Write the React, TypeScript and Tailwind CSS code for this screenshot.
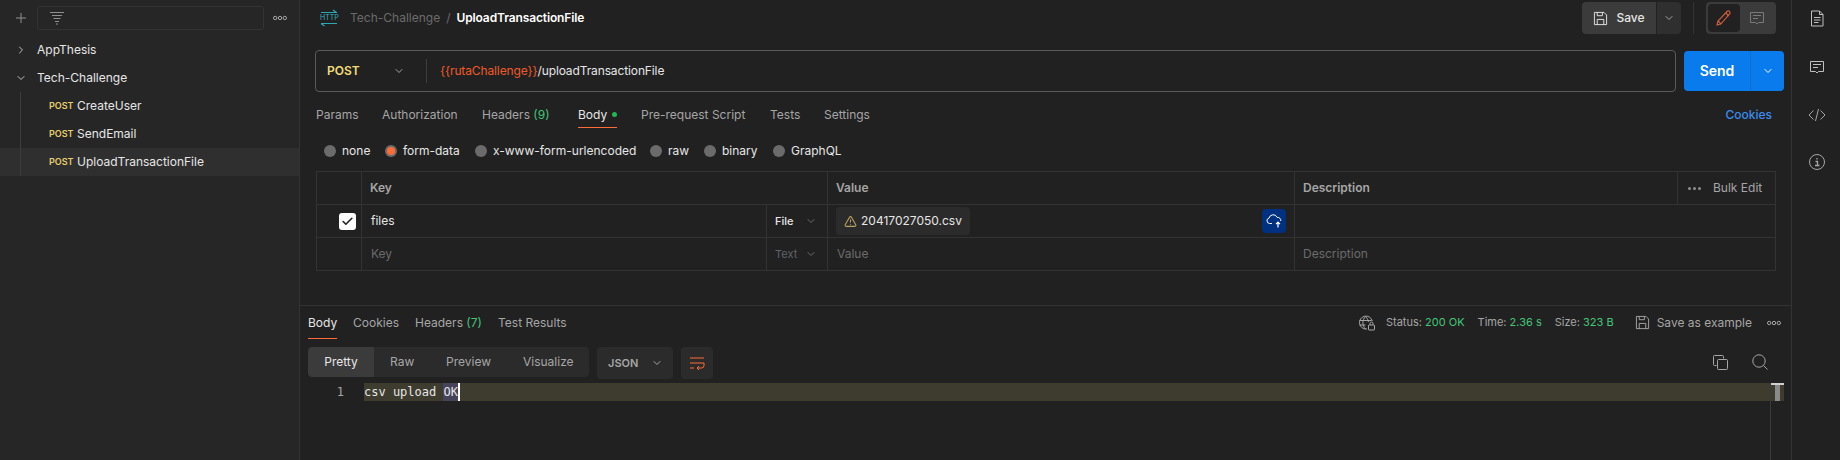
import { ChevronDown, ChevronRight, Check, Plus, TriangleAlert } from "lucide-react"

function Dots({ className = "" }: { className?: string }) {
  return (
    <svg width="14" height="6" viewBox="0 0 14 6" fill="none" stroke="currentColor" strokeWidth="1" className={className}>
      <circle cx="2.2" cy="3" r="1.7" />
      <circle cx="7" cy="3" r="1.7" />
      <circle cx="11.8" cy="3" r="1.7" />
    </svg>
  )
}

function FilterIcon() {
  return (
    <svg width="16" height="14" viewBox="0 0 16 14" fill="none" stroke="#8f8f8f" strokeWidth="1">
      <path d="M1 1.5h14M3 4.5h10M4.5 7.5h7M6 10.5h4M7 13h2" />
    </svg>
  )
}

function SaveIcon({ size = 16, color = "#e6e6e6" }: { size?: number; color?: string }) {
  return (
    <svg width={size} height={size} viewBox="0 0 16 16" fill="none" stroke={color} strokeWidth="1">
      <path d="M1.5 1.5h10.2l2.8 2.8v10.2h-13z" />
      <path d="M4.5 1.5v3.5h5.5v-3.5M4.5 14.5v-5.5h7v5.5" />
    </svg>
  )
}

function CommentIcon({ color = "#a6a6a6" }: { color?: string }) {
  return (
    <svg width="16" height="16" viewBox="0 0 16 16" fill="none" stroke={color} strokeWidth="1">
      <path d="M1.5 2.5h13v10h-5l-1.5 1.5-1.5-1.5h-5z" />
      <path d="M4 5.5h8M4 8.5h5" />
    </svg>
  )
}

function HttpIcon() {
  return (
    <div className="relative w-[18px] h-[18px]">
      <svg width="18" height="18" viewBox="0 0 18 18" fill="none" stroke="#2fa8b5" strokeWidth="1.2">
        <path d="M1 3.5h16M13 1l3.5 2.5" />
        <path d="M1 14.5h16M1 14.5l3.5 2.5" />
      </svg>
      <span className="absolute left-0 top-[4px] w-[18px] text-center text-[7px] leading-[10px] text-[#35b3c0]">HTTP</span>
    </div>
  )
}

function SidebarRow({ name, active }: { name: string; active?: boolean }) {
  return (
    <div className={`h-7 flex items-center pl-[49px] ${active ? "bg-[#2f2f2f]" : ""}`}>
      <span className="w-[28px] text-[9px] font-semibold text-[#e8cf6c]">POST</span>
      <span className="text-xs text-[#e6e6e6]">{name}</span>
    </div>
  )
}

function Radio({ label, checked, className = "" }: { label: string; checked?: boolean; className?: string }) {
  return (
    <div className={`flex items-center gap-[6px] ${className}`}>
      <span className="size-3 rounded-full bg-[#6b6b6b] flex items-center justify-center">
        {checked && <span className="size-2 rounded-full bg-[#ff6c37]" />}
      </span>
      <span className="text-xs text-[#e6e6e6]">{label}</span>
    </div>
  )
}

export default function App() {
  return (
    <div className="w-[1840px] h-[460px] flex overflow-hidden bg-[#212121] font-['Inter',sans-serif]">
      {/* sidebar */}
      <div className="w-[300px] shrink-0 bg-[#262626] border-r border-[#333333]">
        <div className="h-9 flex items-center pl-[13px]">
          <Plus size={16} color="#8f8f8f" strokeWidth={1.5} />
          <div className="ml-[8px] w-[227px] h-[24px] border border-[#333333] rounded-[3px] flex items-center pl-[11px]">
            <FilterIcon />
          </div>
          <Dots className="ml-[9px] text-[#a6a6a6]" />
        </div>
        <div>
          <div className="h-7 flex items-center pl-[15px] gap-[10px]">
            <ChevronRight size={12} color="#c0c0c0" />
            <span className="text-xs text-[#e6e6e6]">AppThesis</span>
          </div>
          <div className="h-7 flex items-center pl-[15px] gap-[10px]">
            <ChevronDown size={12} color="#c0c0c0" />
            <span className="text-xs text-[#e6e6e6]">Tech-Challenge</span>
          </div>
          <div className="relative">
            <div className="absolute left-[20px] top-0 bottom-0 w-px bg-[#3d3d3d]" />
            <SidebarRow name="CreateUser" />
            <SidebarRow name="SendEmail" />
            <SidebarRow name="UploadTransactionFile" active />
          </div>
        </div>
      </div>

      {/* main */}
      <div className="w-[1491px] shrink-0 flex flex-col">
        <div className="h-[306px] border-b border-[#333333] pl-[15px] pr-[7px]">
          <div className="h-[36px] flex items-center">
            <div className="ml-[5px] w-[30px]"><HttpIcon /></div>
            <span className="text-xs text-[#6b6b6b]">Tech-Challenge</span>
            <span className="text-xs text-[#6b6b6b] mx-[6px]">/</span>
            <span className="text-xs font-semibold text-white tracking-[-0.01em]">UploadTransactionFile</span>
            <div className="ml-auto flex items-center">
              <div className="w-[74px] h-8 rounded-l-[4px] bg-[#3b3b3b] flex items-center justify-center gap-2 text-xs font-medium text-[#e6e6e6]">
                <SaveIcon size={15} />
                Save
              </div>
              <div className="ml-px w-[24px] h-8 rounded-r-[4px] bg-[#2f2f2f] flex items-center justify-center">
                <ChevronDown size={12} color="#a6a6a6" />
              </div>
              <div className="mx-[12px] w-px h-8 bg-[#333333]" />
              <div className="w-[70px] h-8 rounded-[4px] bg-[#3b3b3b] flex items-center p-[2px]">
                <div className="w-[32px] h-7 rounded-[4px] bg-[#212121] flex items-center justify-center">
                  <svg width="16" height="16" viewBox="0 0 16 16" fill="none" stroke="#d0603a" strokeWidth="1.1">
                    <path d="M1 15l1-4 9-9.5c.8-.8 1.9-.8 2.6 0s.7 1.8 0 2.5L4.8 14z" />
                    <path d="M9.8 3l3 3M2 11l3 3" />
                  </svg>
                </div>
                <div className="flex-1 flex items-center justify-center">
                  <CommentIcon color="#7a7a7a" />
                </div>
              </div>
              <div className="w-[8px]" />
            </div>
          </div>

          <div className="mt-[14px] flex">
            <div className="w-[1361px] h-[42px] border border-[#5a5a5a] rounded-[4px] flex items-center">
              <span className="ml-[11px] w-[66px] text-xs font-semibold text-[#f2dc7a]">POST</span>
              <ChevronDown size={12} color="#a6a6a6" />
              <div className="ml-[21px] w-px h-6 bg-[#3d3d3d]" />
              <span className="ml-[13px] text-xs tracking-[-0.01em] text-[#f05a28]">{"{{rutaChallenge}}"}</span>
              <span className="text-xs tracking-[-0.01em] text-[#e6e6e6]">/uploadTransactionFile</span>
            </div>
            <div className="ml-[8px] mt-px w-[100px] h-10 rounded-[4px] bg-[#097bed] flex">
              <div className="w-[67px] flex items-center justify-center text-sm font-semibold text-white border-r border-[#0a6fd4]">Send</div>
              <div className="flex-1 flex items-center justify-center"><ChevronDown size={12} color="#ffffff" /></div>
            </div>
          </div>

          <div className="mt-[9px] h-[27px] flex items-center pl-px pr-[12px] text-xs text-[#a6a6a6] relative">
            <span className="w-[66px]">Params</span>
            <span className="w-[100px]">Authorization</span>
            <span className="w-[96px]">Headers <span className="text-[#43c678]">(9)</span></span>
            <span className="w-[63px] relative flex items-center text-[#e6e6e6] h-full">
              Body
              <span className="ml-[5px] size-[5px] rounded-full bg-[#1fb855]" />
              <span className="absolute left-0 bottom-0 w-[39px] h-px bg-[#ff6c37]" />
            </span>
            <span className="w-[129px]">Pre-request Script</span>
            <span className="w-[54px]">Tests</span>
            <span>Settings</span>
            <span className="ml-auto font-medium text-[#3b8df0]">Cookies</span>
          </div>

          <div className="mt-[13px] h-[20px] flex items-center pl-[9px]">
            <Radio label="none" className="w-[61px]" />
            <Radio label="form-data" checked className="w-[90px]" />
            <Radio label="x-www-form-urlencoded" className="w-[175px]" />
            <Radio label="raw" className="w-[54px]" />
            <Radio label="binary" className="w-[69px]" />
            <Radio label="GraphQL" />
          </div>

          <div className="mt-[10px] ml-px w-[1460px] border border-[#333333] text-xs">
            <div className="h-[33px] flex border-b border-[#333333]">
              <div className="w-[45px] border-r border-[#333333]" />
              <div className="w-[466px] border-r border-[#333333] flex items-center pl-2 font-semibold text-[#a6a6a6]">Key</div>
              <div className="w-[467px] border-r border-[#333333] flex items-center pl-2 font-semibold text-[#a6a6a6]">Value</div>
              <div className="w-[383px] border-r border-[#333333] flex items-center pl-2 font-semibold text-[#a6a6a6]">Description</div>
              <div className="flex-1 flex items-center pl-[10px] gap-[12px] text-[#a6a6a6]">
                <span className="flex gap-[2px]">
                  <span className="size-[3px] rounded-full bg-[#8f8f8f]" />
                  <span className="size-[3px] rounded-full bg-[#8f8f8f]" />
                  <span className="size-[3px] rounded-full bg-[#8f8f8f]" />
                </span>
                <span>Bulk Edit</span>
              </div>
            </div>
            <div className="h-[33px] flex border-b border-[#333333]">
              <div className="w-[45px] border-r border-[#333333] flex items-center justify-end pr-[5px]">
                <span className="size-[17px] rounded-[3px] bg-white flex items-center justify-center">
                  <Check size={13} color="#212121" strokeWidth={3} />
                </span>
              </div>
              <div className="w-[405px] border-r border-[#333333] flex items-center pl-[9px] text-[#e6e6e6]">files</div>
              <div className="w-[61px] border-r border-[#333333] flex items-center pl-2 text-[11px] font-medium text-[#e6e6e6]">
                File
                <ChevronDown size={12} color="#6b6b6b" className="ml-[11px]" />
              </div>
              <div className="w-[467px] border-r border-[#333333] flex items-center pl-[8px] pr-[8px] justify-between">
                <div className="h-7 rounded-[4px] bg-[#2b2b2b] flex items-center px-2 gap-[4px] text-[#e6e6e6] text-xs">
                  <TriangleAlert size={13} color="#b8a35e" />
                  20417027050.csv
                </div>
                <div className="size-6 rounded-[4px] bg-[#003080] flex items-center justify-center">
                  <svg width="16" height="14" viewBox="0 0 16 14" fill="none" stroke="#ffffff" strokeWidth="1">
                    <path d="M6 9.5H3.5a2.8 2.8 0 0 1-.4-5.5 4.2 4.2 0 0 1 8-.6A3.2 3.2 0 0 1 14.8 7" />
                    <path d="M12 13.5V8.5M10 10.2l2-2 2 2" strokeWidth="1.2" />
                  </svg>
                </div>
              </div>
              <div className="flex-1" />
            </div>
            <div className="h-[32px] flex">
              <div className="w-[45px] border-r border-[#333333]" />
              <div className="w-[405px] border-r border-[#333333] flex items-center pl-[9px] text-[#6b6b6b]">Key</div>
              <div className="w-[61px] border-r border-[#333333] flex items-center pl-2 text-[11px] text-[#5f6468]">
                Text
                <ChevronDown size={12} color="#6b6b6b" className="ml-[8px]" />
              </div>
              <div className="w-[467px] border-r border-[#333333] flex items-center pl-[9px] text-[#6b6b6b]">Value</div>
              <div className="flex-1 flex items-center pl-2 text-[#6b6b6b]">Description</div>
            </div>
          </div>
        </div>

        {/* response */}
        <div className="flex-1 pl-[8px] relative">
          <div className="h-[33px] flex items-center text-xs text-[#a6a6a6]">
            <span className="w-[45px] relative h-full flex items-center text-[#e6e6e6]">
              Body
              <span className="absolute left-0 bottom-0 w-[29px] h-px bg-[#ff6c37]" />
            </span>
            <span className="w-[62px]">Cookies</span>
            <span className="w-[83px]">Headers <span className="text-[#43c678]">(7)</span></span>
            <span>Test Results</span>
            <div className="ml-auto flex items-center pr-[10px]">
              <svg width="17" height="16" viewBox="0 0 17 16" fill="none" stroke="#a6a6a6" strokeWidth="1">
                <path d="M9 14A6.5 6.5 0 1 1 14.3 6M1.5 5.5h12M1.5 10h6M7.5 1.5c-3.5 3.5-3.5 9 0 12.5M7.5 1.5c1.8 1.8 2.8 3.8 2.9 5.5" />
                <rect x="10.5" y="10" width="6" height="5" rx="0.5" />
                <path d="M12 10V8.5a1.5 1.5 0 0 1 3 0V10" />
              </svg>
              <span className="ml-[11px] text-[11px]">Status: <span className="text-[#43c678]">200 OK</span></span>
              <span className="ml-[13px] text-[11px]">Time: <span className="text-[#43c678]">2.36 s</span></span>
              <span className="ml-[13px] text-[11px]">Size: <span className="text-[#43c678]">323 B</span></span>
              <span className="ml-[21px]"><SaveIcon size={15} color="#a6a6a6" /></span>
              <span className="ml-[7px]">Save as example</span>
              <Dots className="ml-[15px] text-[#a6a6a6]" />
            </div>
          </div>
          <div className="mt-2 flex items-start text-xs text-[#a6a6a6]">
            <div className="w-[281px] h-[30px] rounded-[4px] bg-[#2b2b2b] flex items-center overflow-hidden">
              <span className="w-[66px] h-full rounded-l-[4px] bg-[#3b3b3b] flex items-center justify-center text-[#e6e6e6]">Pretty</span>
              <span className="ml-[16px] w-[56px]">Raw</span>
              <span className="w-[77px]">Preview</span>
              <span>Visualize</span>
            </div>
            <div className="ml-2 w-[76px] h-[32px] rounded-[4px] bg-[#2b2b2b] flex items-center pl-[11px] text-[11px] font-semibold">
              JSON
              <ChevronDown size={12} color="#a6a6a6" className="ml-[13px]" />
            </div>
            <div className="ml-2 size-[32px] rounded-[4px] bg-[#2b2b2b] flex items-center justify-center">
              <svg width="16" height="14" viewBox="0 0 16 14" fill="none" stroke="#ff6c37" strokeWidth="1">
                <path d="M1 2h14M1 7h14M1 12h4M15 7v2.5a2.5 2.5 0 0 1-2.5 2.5H8M10 10l-2 2 2 2" />
              </svg>
            </div>
            <div className="ml-auto flex items-center pr-[23px] pt-[7px] gap-[24px]">
              <svg width="15" height="15" viewBox="0 0 15 15" fill="none" stroke="#a6a6a6" strokeWidth="1">
                <path d="M3.5 10.5h-2a1 1 0 0 1-1-1V1.5a1 1 0 0 1 1-1h8a1 1 0 0 1 1 1v2" />
                <rect x="4.5" y="4.5" width="10" height="10" rx="1" />
              </svg>
              <svg width="16" height="16" viewBox="0 0 16 16" fill="none" stroke="#a6a6a6" strokeWidth="1">
                <circle cx="7" cy="7" r="6.2" />
                <path d="M11.5 11.5l4 4" />
              </svg>
            </div>
          </div>
          <div className="mt-1 mr-[7px] flex h-[18px] font-['DejaVu_Sans_Mono',monospace] text-xs leading-[18px]">
            <span className="w-[56px] text-right pr-[20px] text-[#a6a6a6]">1</span>
            <div className="flex-1 bg-[#3d3c2e] flex relative whitespace-pre">
              <span className="text-[#e6e6e6]">csv upload </span>
              <span className="bg-[#46445a] text-[#e6e6e6] border-r-2 border-white">OK</span>
              <div className="absolute right-0 top-0 h-[18px] w-[13px] border-t-2 border-[#cfcfcf] flex justify-center">
                <span className="w-[5px] bg-[#8a8a8a]" />
              </div>
            </div>
          </div>
          <div className="absolute right-[20px] top-[77px] bottom-0 w-px bg-[#3a3a3a]" />
        </div>
      </div>

      {/* right rail */}
      <div className="flex-1 border-l border-[#333333] flex flex-col items-center pt-[10px] pl-px">
        <svg width="14" height="17" viewBox="0 0 14 17" fill="none" stroke="#c0c0c0" strokeWidth="1">
          <path d="M1.5 1h8l3.5 3.5V16h-11.5zM9.5 1v3.5H13M4 7.5h6.5M4 10h6.5M4 12.5h4.5" />
        </svg>
        <div className="mt-[32px]"><CommentIcon color="#c0c0c0" /></div>
        <svg className="mt-[33px]" width="18" height="14" viewBox="0 0 18 14" fill="none" stroke="#a6a6a6" strokeWidth="1">
          <path d="M5.5 2.5L1 7l4.5 4.5M12.5 2.5L17 7l-4.5 4.5M10.5 1L7.5 13" />
        </svg>
        <svg className="mt-[32px]" width="16" height="16" viewBox="0 0 16 16" fill="none" stroke="#a6a6a6" strokeWidth="1">
          <circle cx="8" cy="8" r="7.5" />
          <path d="M6.5 7.5h2v4M6 11.5h4.5M8 4v1.5" strokeWidth="1.3" />
        </svg>
      </div>
    </div>
  )
}
